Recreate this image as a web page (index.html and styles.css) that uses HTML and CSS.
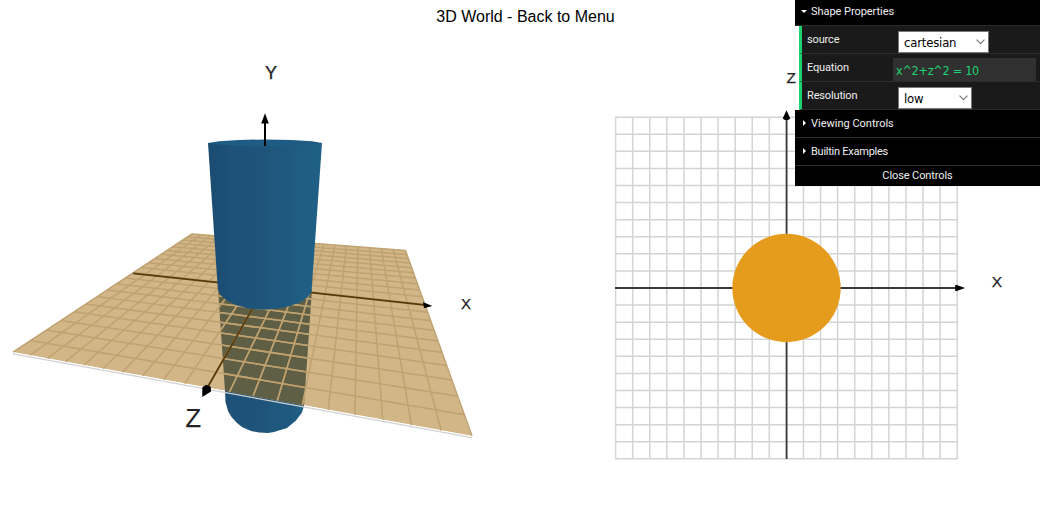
FILE: index.html
```
<!DOCTYPE html>
<html lang="en">
<head>
<meta charset="utf-8">
<title>3D World</title>
<link rel="stylesheet" href="styles.css">
</head>
<body>
<svg class="world" width="1051" height="518" viewBox="0 0 1051 518">
  <defs>
    <linearGradient id="side" gradientUnits="userSpaceOnUse" x1="208" y1="0" x2="322" y2="0">
      <stop offset="0" stop-color="#1b4c72"/><stop offset=".19" stop-color="#1c5076"/>
      <stop offset=".2" stop-color="#1e5278"/><stop offset=".54" stop-color="#1f557b"/>
      <stop offset=".55" stop-color="#1f577d"/><stop offset=".74" stop-color="#1f597f"/>
      <stop offset=".78" stop-color="#205d83"/><stop offset="1" stop-color="#206086"/>
    </linearGradient>
    <clipPath id="shade"><path d="M218 289L312 289L304 409L225 394Z"/></clipPath>
  </defs>
  <path fill="url(#side)" d="M225 390L225.500 402L228 411L231.500 417L237 423L242 427L251 431L259 432.600L268 433L274 432L287 428L296 420.500L302 412.500L304 406L304 390Z"/>
  <path class="plane" d="M192 233.800L405.500 250.300L471.500 436L13 352Z"/>
  <path class="shadow" d="M218 289L312 289L304 405.500L225 391Z"/>
  <path class="edge-gap" d="M13 353L225 391.600M304 406L471.500 436.500"/>
  <path class="edge" d="M13 353.900L472 437.600"/>
  <path class="floor-grid" id="floor-grid"/>
  <path class="shadow-grid" id="shadow-grid" clip-path="url(#shade)"/>
  <path class="floor-axis" d="M133 273.300L426 305.200M265 286.800L206 390"/>
  <path fill="url(#side)" d="M208 143L322 143L311.500 292L308 297L300 302.500L288 306.500L275 309L262 309.700L248 308.500L236 305L226 300L220.500 295L217.800 289Z"/>
  <path class="cap" d="M208 143L219 141.300L239 140L265 139.400L292 140L312 141.300L322 143L312 144.500L288 146L265 146.500L242 146L219 144.500Z"/>
  <path class="axis" d="M265 146L265 121"/>
  <path d="M265 113.300L268.800 123.600L261.200 123.600ZM432.300 306L423 302L424 308.300ZM202.300 397L202.300 387.500L206 384.800L210.800 386.800L211 391.500Z"/>
  <path class="flat-grid" id="flat-grid"/>
  <path class="flat-axis" d="M786.600 459L786.600 118M615 288L957 288"/>
  <path d="M786.500 110.300L790.300 118.500L788 120L785 120L782.700 118.500ZM965 288L956 291.300L955 290L955 286L956 284.700Z"/>
  <circle class="disc" cx="786.500" cy="288" r="54.200"/>
  <g class="labels">
    <text x="271" y="79" font-size="18">Y</text>
    <text x="466" y="308.600" font-size="15">X</text>
    <text x="193.300" y="427.200" font-size="25.500">Z</text>
    <text x="791.300" y="82.800" font-size="15.500">Z</text>
    <text x="997" y="287.400" font-size="15.500">X</text>
  </g>
</svg>
<header class="heading">3D World - Back to Menu</header>
<aside class="gui">
  <div class="title"><i class="arrow open"></i>Shape Properties</div>
  <div class="folder">
    <label class="row"><span class="name">source</span><span class="select wide">cartesian<svg width="9" height="6"><path d="M.5 .7L4.500 4.700L8.500 .7"/></svg></span></label>
    <label class="row"><span class="name">Equation</span><span class="input">x^2+z^2 = 10</span></label>
    <label class="row"><span class="name">Resolution</span><span class="select">low<svg width="9" height="6"><path d="M.5 .7L4.500 4.700L8.500 .7"/></svg></span></label>
  </div>
  <div class="title second"><i class="arrow"></i>Viewing Controls</div>
  <div class="title second tight"><i class="arrow"></i>Builtin Examples</div>
  <div class="close">Close Controls</div>
</aside>
<script src="grid.js"></script>
</body>
</html>
```
FILE: styles.css
```
body { margin: 0; width: 1051px; height: 518px; overflow: hidden; background: #fff; font-family: "Liberation Sans", Arial, sans-serif; }
.world { position: absolute; left: 0; top: 0; }
.plane { fill: #d3b687; }
.edge-gap { fill: none; stroke: #fff; stroke-width: 1.5; }
.edge { fill: none; stroke: #d2d2d2; stroke-width: 1.3; }
.shadow { fill: #5e5f45; }
.floor-grid { fill: none; stroke: #bfa271; stroke-width: 1.5; }
.shadow-grid { fill: none; stroke: #bea16e; stroke-width: 1.5; }
.floor-axis { fill: none; stroke: #573809; stroke-width: 1.7; }
.cap { fill: #1f5c84; }
.axis { stroke: #000; stroke-width: 2; }
.flat-grid { fill: none; stroke: #d4d4d4; stroke-width: 1.5; }
.flat-axis { fill: none; stroke: #3a3a3a; stroke-width: 1.8; }
.disc { fill: #e59b1c; }
.labels { fill: #222; stroke: #222; stroke-width: .25; text-anchor: middle; }
.heading { position: relative; padding-top: 8px; text-align: center; font-size: 16px; line-height: 18px; color: #000; }
.gui { position: absolute; left: 795px; top: 0; width: 245px; font: 11px Roboto, "Liberation Sans", sans-serif; color: #eee; }
.title { box-sizing: border-box; display: flex; align-items: center; height: 26px; padding: 0 0 3px 6px; background: #000; border-bottom: 1px solid #2c2c2c; letter-spacing: -.05px; }
.title.second { height: 28px; padding-bottom: 1px; letter-spacing: 0; }
.title.tight { letter-spacing: -.25px; }
.arrow { width: 10px; height: 6px; }
.arrow::before { content: ""; display: block; width: 0; border-left: 3px solid #fff; border-top: 3px solid transparent; border-bottom: 3px solid transparent; margin-left: 2px; }
.arrow.open::before { margin: 2px 0 0 0; border-top: 3px solid #fff; border-left: 3px solid transparent; border-right: 3px solid transparent; border-bottom: 0; }
.folder { margin-left: 4px; }
.row { box-sizing: border-box; display: flex; height: 28px; border-left: 3px solid #1ed36f; border-bottom: 1px solid #2c2c2c; background: #1a1a1a; }
.name { width: 91px; padding-left: 5px; box-sizing: border-box; line-height: 27px; letter-spacing: -.15px; }
.select { box-sizing: border-box; width: 74px; height: 22px; margin: 5px 0 0 5px; padding: 0 3px 0 5px; display: flex; align-items: center; justify-content: space-between; background: #fff; border: 1px solid #777; color: #000; font: 13px "DejaVu Sans Condensed", "DejaVu Sans", sans-serif; font-stretch: condensed; letter-spacing: -.2px; }
.select.wide { width: 91px; }
.select svg { fill: none; stroke: #777; stroke-width: 1.1; }
.input { width: 143px; height: 23px; margin-top: 4px; padding-left: 3px; box-sizing: border-box; background: #303030; color: #1ed36f; font: 12.500px/25px "DejaVu Sans Condensed", "DejaVu Sans", sans-serif; font-stretch: condensed; letter-spacing: -.25px; }
.close { height: 20px; line-height: 19px; text-align: center; background: #000; letter-spacing: -.1px; }
```
FILE: grid.js
```
// Floor: projective map from the unit square to the screen
function project(u, v) {
  var w = 1 - 0.1302 * u - 0.516 * v;
  return ((192 + 160.7 * u - 185.7 * v) / w).toFixed(2) + " " + ((234 - 16.1 * u - 63.6 * v) / w).toFixed(2);
}
var floor = "", flat = "", size = 17.08;
for (var i = 0; i <= 20; i++) {
  var t = i / 20;
  floor += "M" + project(t, 0) + "L" + project(t, 1);
  if (i < 20) floor += "M" + project(0, t) + "L" + project(1, t);
  var x = 615.6 + i * size, y = 117.2 + i * size;
  flat += "M" + x + " 117L" + x + " 459M615 " + y + "L958 " + y;
}
document.getElementById("floor-grid").setAttribute("d", floor);
document.getElementById("shadow-grid").setAttribute("d", floor);
document.getElementById("flat-grid").setAttribute("d", flat);
```
